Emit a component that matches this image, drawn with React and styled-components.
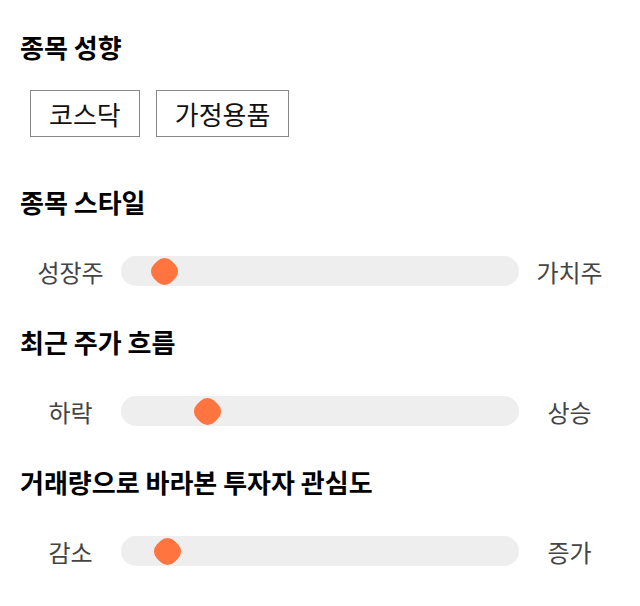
import React from 'react';
import styled, { createGlobalStyle } from 'styled-components';

const GlobalStyle = createGlobalStyle`
  body {
    margin: 0;
    background: #fff;
    font-family: 'Noto Sans CJK KR', 'Noto Sans', sans-serif;
  }
`;

const Page = styled.div`
  width: 640px;
  padding: 31px 0 0;
  display: flex;
  flex-direction: column;
`;

const Section = styled.section`
  display: flex;
  flex-direction: column;
`;

const Title = styled.h2`
  margin: 0;
  padding-left: 20px;
  font-size: 26px;
  line-height: 32px;
  font-weight: 700;
  color: #000;
`;

const TagList = styled.div`
  display: flex;
  gap: 16px;
  padding: 27px 0 0 30px;
  margin-bottom: 49px;
`;

const Tag = styled.div`
  box-sizing: border-box;
  height: 47px;
  padding: 0 18px;
  border: 1px solid #888;
  display: flex;
  align-items: center;
  font-size: 26px;
  color: #111;
`;

const SliderRow = styled.div`
  display: flex;
  align-items: center;
  padding: 38px 0 0 20px;
  height: 30px;
  margin-bottom: 40px;
`;

const Label = styled.div`
  width: 101px;
  text-align: center;
  font-size: 24px;
  color: #444;
`;

const Track = styled.div`
  position: relative;
  width: 398px;
  height: 30px;
  border-radius: 15px;
  background: #eeeeee;
`;

const Thumb = styled.div`
  position: absolute;
  top: 2.5px;
  width: 25px;
  height: 25px;
  margin-left: -12.5px;
  border-radius: 10px;
  background: #ff743f;
  transform: rotate(45deg);
`;

const sliders = [
  { title: '종목 스타일', left: '성장주', right: '가치주', value: 43 },
  { title: '최근 주가 흐름', left: '하락', right: '상승', value: 86 },
  { title: '거래량으로 바라본 투자자 관심도', left: '감소', right: '증가', value: 46 },
];

export default function App() {
  return (
    <>
      <GlobalStyle />
      <Page>
        <Section>
          <Title>종목 성향</Title>
          <TagList>
            <Tag>코스닥</Tag>
            <Tag>가정용품</Tag>
          </TagList>
        </Section>
        {sliders.map(s => (
          <Section key={s.title}>
            <Title>{s.title}</Title>
            <SliderRow>
              <Label>{s.left}</Label>
              <Track>
                <Thumb style={{ left: s.value }} />
              </Track>
              <Label>{s.right}</Label>
            </SliderRow>
          </Section>
        ))}
      </Page>
    </>
  );
}
